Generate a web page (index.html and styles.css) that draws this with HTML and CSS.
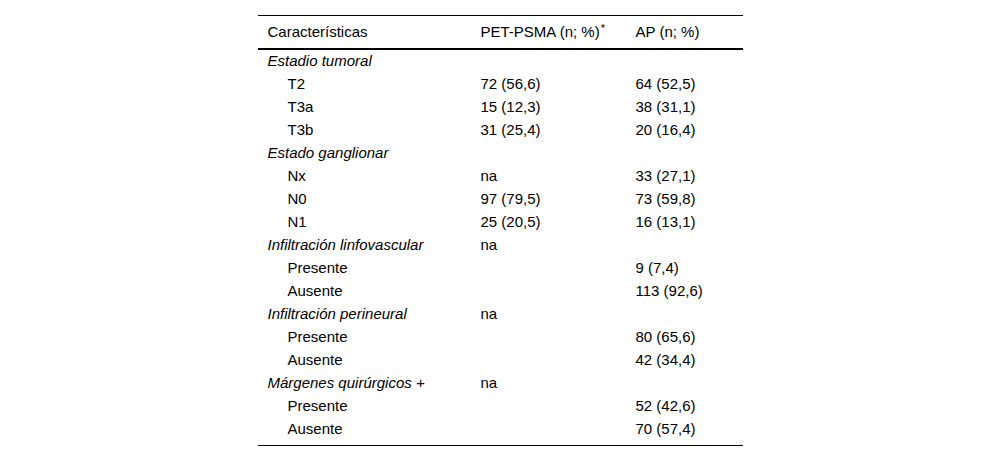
FILE: index.html
```html
<!DOCTYPE html>
<html lang="es">
<head>
<meta charset="utf-8">
<title>Tabla</title>
<link rel="stylesheet" href="styles.css">
</head>
<body>
<table class="data">
  <colgroup>
    <col class="c1"><col class="c2"><col class="c3">
  </colgroup>
  <thead>
    <tr><th>Características</th><th>PET-PSMA (n; %)<sup>*</sup></th><th>AP (n; %)</th></tr>
  </thead>
  <tbody>
    <tr><td class="grp">Estadio tumoral</td><td></td><td></td></tr>
    <tr><td class="sub">T2</td><td>72 (56,6)</td><td>64 (52,5)</td></tr>
    <tr><td class="sub">T3a</td><td>15 (12,3)</td><td>38 (31,1)</td></tr>
    <tr><td class="sub">T3b</td><td>31 (25,4)</td><td>20 (16,4)</td></tr>
    <tr><td class="grp">Estado ganglionar</td><td></td><td></td></tr>
    <tr><td class="sub">Nx</td><td>na</td><td>33 (27,1)</td></tr>
    <tr><td class="sub">N0</td><td>97 (79,5)</td><td>73 (59,8)</td></tr>
    <tr><td class="sub">N1</td><td>25 (20,5)</td><td>16 (13,1)</td></tr>
    <tr><td class="grp">Infiltración linfovascular</td><td>na</td><td></td></tr>
    <tr><td class="sub">Presente</td><td></td><td>9 (7,4)</td></tr>
    <tr><td class="sub">Ausente</td><td></td><td>113 (92,6)</td></tr>
    <tr><td class="grp">Infiltración perineural</td><td>na</td><td></td></tr>
    <tr><td class="sub">Presente</td><td></td><td>80 (65,6)</td></tr>
    <tr><td class="sub">Ausente</td><td></td><td>42 (34,4)</td></tr>
    <tr><td class="grp">Márgenes quirúrgicos +</td><td>na</td><td></td></tr>
    <tr><td class="sub">Presente</td><td></td><td>52 (42,6)</td></tr>
    <tr class="last"><td class="sub">Ausente</td><td></td><td>70 (57,4)</td></tr>
  </tbody>
</table>
</body>
</html>
```
FILE: styles.css
```css
html, body {
  margin: 0;
  padding: 0;
  background: #ffffff;
}
body {
  padding-top: 15px;
  font-family: "Liberation Sans", Arial, sans-serif;
  font-size: 15px;
  color: #000000;
}
.data {
  width: 485px;
  margin: 0 auto;
  border-collapse: collapse;
  table-layout: fixed;
  border-top: 1px solid #000;
  border-bottom: 1px solid #000;
}
.c1 { width: 213px; }
.c2 { width: 155px; }
.c3 { width: 117px; }
.data th,
.data td {
  padding: 0 0 2px 10px;
  text-align: left;
  font-weight: normal;
  line-height: 21px;
  white-space: nowrap;
  vertical-align: top;
}
.data thead th {
  padding-top: 5px;
  padding-bottom: 6px;
  border-bottom: 2px solid #000;
}
.data sup {
  font-size: 11px;
  line-height: 0;
  vertical-align: 5px;
  margin-left: 1px;
}
.data td.grp {
  font-style: italic;
}
.data td.sub {
  padding-left: 30px;
}
.data tr.last td {
  padding-bottom: 6px;
}
```
